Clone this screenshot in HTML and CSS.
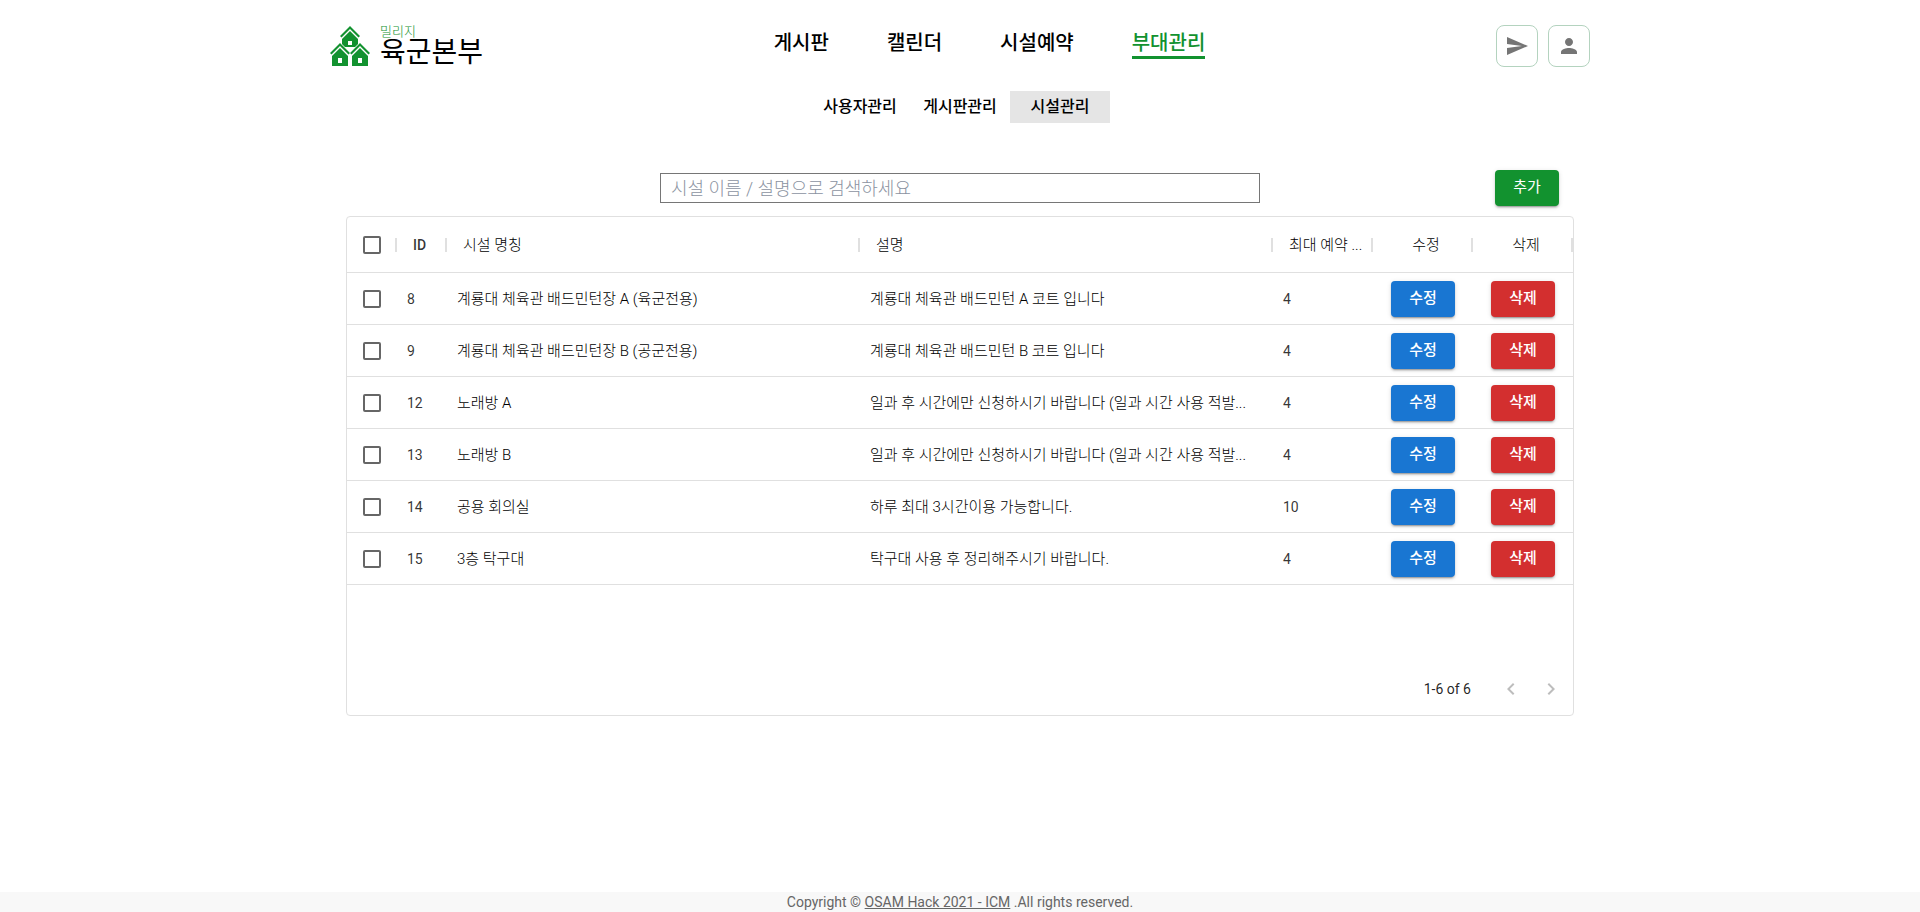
FILE: index.html
```html
<!DOCTYPE html>
<html lang="ko">
<head>
<meta charset="utf-8">
<title>시설관리 - 밀리지</title>
<link rel="stylesheet" href="styles.css">
</head>
<body>
<header class="header">
  <a class="logo" href="#">
    <svg class="logo-mark" viewBox="0 0 40 40" aria-hidden="true">
      <defs>
        <g id="house">
          <path d="M0 10 L10 0 L20 10 L18.500 11.500 L10 3 L1.500 11.500 Z"/>
          <path d="M10 5 L18 13 V23 H2 V13 Z"/>
          <path d="M8 15 H12 V20 H8 Z" fill="#fff"/>
        </g>
      </defs>
      <g fill="#12922f">
        <path d="M10 10 L20 0 L30 10 L28.500 11.500 L20 3 L11.500 11.500 Z"/>
        <path d="M20 5 L28 13 V21 H12 V13 Z"/>
        <path d="M18 15 H22 V19 H18 Z" fill="#fff"/>
        <path d="M-1 27 L10 16 L20 26 L30 16 L41 27 V40 H-1 Z" fill="#fff"/>
        <use href="#house" x="0" y="17"/>
        <use href="#house" x="20" y="17"/>
      </g>
    </svg>
    <span class="logo-text">
      <span class="logo-sub">밀리지</span>
      <span class="logo-name">육군본부</span>
    </span>
  </a>
  <nav class="main-nav">
    <a href="#">게시판</a>
    <a href="#">캘린더</a>
    <a href="#">시설예약</a>
    <a href="#" class="active">부대관리</a>
  </nav>
  <div class="header-actions">
    <button class="icon-button" type="button" aria-label="보내기"><svg viewBox="0 0 24 24"><path d="M2.010 21 23 12 2.010 3 2 10l15 2-15 2z"/></svg></button>
    <button class="icon-button" type="button" aria-label="내 정보"><svg viewBox="0 0 24 24"><path d="M12 12c2.210 0 4-1.790 4-4s-1.790-4-4-4-4 1.790-4 4 1.790 4 4 4zm0 2c-2.670 0-8 1.340-8 4v2h16v-2c0-2.660-5.330-4-8-4z"/></svg></button>
  </div>
</header>
<nav class="sub-nav">
  <a href="#">사용자관리</a>
  <a href="#">게시판관리</a>
  <a href="#" class="active">시설관리</a>
</nav>
<main class="content">
  <div class="toolbar">
    <input class="search" type="search" aria-label="시설 검색" placeholder="시설 이름 / 설명으로 검색하세요">
    <button class="button add" type="button">추가</button>
  </div>
  <section class="grid">
    <table class="table">
      <colgroup>
        <col class="col-check"><col class="col-id"><col><col><col class="col-small"><col class="col-small"><col class="col-small">
      </colgroup>
      <thead>
        <tr>
          <th class="check"><input type="checkbox" aria-label="전체 선택"></th>
          <th class="number">ID</th><th>시설 명칭</th><th>설명</th><th>최대 예약 ...</th>
          <th class="action">수정</th><th class="action">삭제</th>
        </tr>
      </thead>
      <tbody>
        <tr><td class="check"><input type="checkbox" aria-label="8 선택"></td><td class="number">8</td><td>계룡대 체육관 배드민턴장 A (육군전용)</td><td>계룡대 체육관 배드민턴 A 코트 입니다</td><td class="number">4</td><td class="action"><button class="button edit" type="button">수정</button></td><td class="action"><button class="button delete" type="button">삭제</button></td></tr>
        <tr><td class="check"><input type="checkbox" aria-label="9 선택"></td><td class="number">9</td><td>계룡대 체육관 배드민턴장 B (공군전용)</td><td>계룡대 체육관 배드민턴 B 코트 입니다</td><td class="number">4</td><td class="action"><button class="button edit" type="button">수정</button></td><td class="action"><button class="button delete" type="button">삭제</button></td></tr>
        <tr><td class="check"><input type="checkbox" aria-label="12 선택"></td><td class="number">12</td><td>노래방 A</td><td>일과 후 시간에만 신청하시기 바랍니다 (일과 시간 사용 적발...</td><td class="number">4</td><td class="action"><button class="button edit" type="button">수정</button></td><td class="action"><button class="button delete" type="button">삭제</button></td></tr>
        <tr><td class="check"><input type="checkbox" aria-label="13 선택"></td><td class="number">13</td><td>노래방 B</td><td>일과 후 시간에만 신청하시기 바랍니다 (일과 시간 사용 적발...</td><td class="number">4</td><td class="action"><button class="button edit" type="button">수정</button></td><td class="action"><button class="button delete" type="button">삭제</button></td></tr>
        <tr><td class="check"><input type="checkbox" aria-label="14 선택"></td><td class="number">14</td><td>공용 회의실</td><td>하루 최대 3시간이용 가능합니다.</td><td class="number">10</td><td class="action"><button class="button edit" type="button">수정</button></td><td class="action"><button class="button delete" type="button">삭제</button></td></tr>
        <tr><td class="check"><input type="checkbox" aria-label="15 선택"></td><td class="number">15</td><td>3층 탁구대</td><td>탁구대 사용 후 정리해주시기 바랍니다.</td><td class="number">4</td><td class="action"><button class="button edit" type="button">수정</button></td><td class="action"><button class="button delete" type="button">삭제</button></td></tr>
      </tbody>
    </table>
    <div class="pagination">
      <span class="page-count">1-6 of 6</span>
      <button class="page-button" type="button" disabled aria-label="이전 페이지"><svg viewBox="0 0 24 24"><path d="M15.410 16.590 10.830 12l4.580-4.590L14 6l-6 6 6 6z"/></svg></button>
      <button class="page-button" type="button" disabled aria-label="다음 페이지"><svg viewBox="0 0 24 24"><path d="M8.590 16.590 13.170 12 8.590 7.410 10 6l6 6-6 6z"/></svg></button>
    </div>
  </section>
</main>
<footer class="footer">Copyright © <a href="#">OSAM Hack 2021 - ICM</a> .All rights reserved.</footer>
</body>
</html>
```
FILE: styles.css
```css
* {
  box-sizing: border-box;
}

body {
  display: flex;
  flex-direction: column;
  min-height: 100vh;
  margin: 0;
  background: #fff;
  color: #000;
  font-family: Roboto, "Noto Sans CJK KR", sans-serif;
}

a {
  color: inherit;
  text-decoration: none;
}

button {
  font-family: inherit;
  cursor: pointer;
}

.header {
  display: flex;
  align-items: center;
  justify-content: space-between;
  width: 100%;
  max-width: 1280px;
  margin: 0 auto;
  padding: 25px 10px 0;
}

.logo {
  display: flex;
  align-items: center;
  gap: 10px;
}

.logo-mark {
  width: 40px;
  height: 40px;
}

.logo-text {
  display: flex;
  flex-direction: column;
}

.logo-sub {
  color: #12922f;
  font-size: 13px;
  font-weight: 300;
  line-height: 14px;
}

.logo-name {
  font-size: 28px;
  line-height: 28px;
}

.main-nav {
  display: flex;
  gap: 58px;
  padding-bottom: 3px;
  font-size: 20px;
  font-weight: 500;
  line-height: 26px;
}

.main-nav a {
  border-bottom: 3px solid transparent;
}

.main-nav .active {
  border-color: #12922f;
  color: #12922f;
}

.header-actions {
  display: flex;
  gap: 10px;
}

.icon-button {
  display: grid;
  place-items: center;
  width: 42px;
  height: 42px;
  padding: 0;
  border: 1px solid #b4d3bf;
  border-radius: 8px;
  background: #fff;
}

.icon-button svg,
.page-button svg {
  width: 24px;
  height: 24px;
  fill: #757575;
}

.sub-nav {
  display: flex;
  justify-content: center;
  margin-top: 24px;
  font-size: 16px;
  font-weight: 500;
  line-height: 32px;
}

.sub-nav a {
  width: 100px;
  text-align: center;
}

.sub-nav .active {
  background: #e5e5e5;
}

.content {
  flex: 1;
  width: 100%;
  max-width: 1228px;
  margin: 0 auto;
  padding-top: 47px;
}

.toolbar {
  display: grid;
  grid-template-columns: 1fr minmax(0, 600px) 1fr;
  align-items: center;
  padding-bottom: 10px;
}

.search {
  grid-column: 2;
  height: 30px;
  padding: 0 10px;
  border: 1px solid #767676;
  background: #fff;
  font-family: inherit;
  font-size: 18px;
  font-weight: 300;
  appearance: none;
}

.search::placeholder {
  color: #8b93a1;
}

.button {
  width: 64px;
  height: 36px;
  padding: 0 0 2px;
  border: 0;
  border-radius: 4px;
  box-shadow: 0 3px 1px -2px rgba(0, 0, 0, 0.2), 0 2px 2px rgba(0, 0, 0, 0.14), 0 1px 5px rgba(0, 0, 0, 0.12);
  color: #fff;
  font-size: 15px;
  font-weight: 500;
  line-height: 24px;
}

.add {
  justify-self: end;
  margin-right: 15px;
  background: #12922f;
  font-weight: 400;
}

.edit {
  background: #1976d2;
}

.delete {
  background: #d32f2f;
}

.grid {
  display: flex;
  flex-direction: column;
  min-height: 500px;
  border: 1px solid #e0e0e0;
  border-radius: 4px;
}

.table {
  width: 100%;
  border-collapse: separate;
  border-spacing: 0;
  table-layout: fixed;
  color: #000;
  font-size: 15px;
  font-weight: 300;
  line-height: 20px;
}

.col-check,
.col-id {
  width: 50px;
}

.col-small {
  width: 100px;
}

.table th,
.table td {
  overflow: hidden;
  padding: 0 10px;
  border-bottom: 1px solid #e0e0e0;
  text-align: left;
  text-overflow: ellipsis;
  white-space: nowrap;
}

.table th {
  height: 56px;
  padding: 0 8px 0 16px;
  background: linear-gradient(#e0e0e0, #e0e0e0) right center / 2px 14px no-repeat;
  font-weight: 300;
}

.table td {
  height: 52px;
}

.table .number {
  color: rgba(0, 0, 0, 0.8);
  font-size: 14px;
  font-weight: 400;
}

.table th.number {
  font-weight: 500;
}

.table .check {
  padding: 0;
  text-align: center;
}

.table .action {
  padding: 0;
  text-align: center;
}

.table th.action {
  padding-left: 6px;
}

.check input {
  display: block;
  width: 18px;
  height: 18px;
  margin: 0 auto;
  border: 2px solid #666;
  border-radius: 2px;
  background: #fff;
  appearance: none;
}

.pagination {
  display: flex;
  align-items: center;
  justify-content: flex-end;
  height: 52px;
  margin-top: auto;
  padding-right: 2px;
  color: rgba(0, 0, 0, 0.87);
  font-size: 14px;
}

.page-count {
  margin-right: 20px;
}

.page-button {
  display: grid;
  place-items: center;
  width: 40px;
  height: 40px;
  padding: 0;
  border: 0;
  background: none;
}

.page-button svg {
  fill: #bdbdbd;
}

.footer {
  background: #f8f8f8;
  color: #666;
  font-size: 14px;
  line-height: 20px;
  text-align: center;
}

.footer a {
  text-decoration: underline;
}
```
